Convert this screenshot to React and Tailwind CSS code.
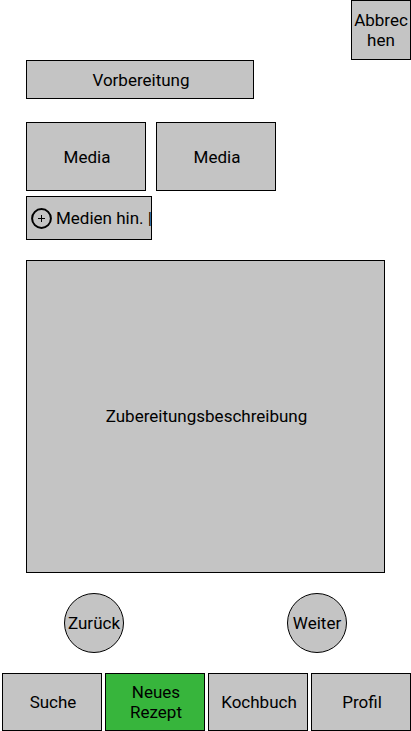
const box = 'border border-black bg-[#c4c4c4]';

const tabs = [
  { label: 'Suche', active: false },
  { label: 'Neues Rezept', active: true },
  { label: 'Kochbuch', active: false },
  { label: 'Profil', active: false },
];

function AddIcon() {
  return (
    <svg className="size-[21px] shrink-0" viewBox="0 0 21 21" fill="none" stroke="black" aria-hidden="true">
      <circle cx="10.5" cy="10.5" r="9.4" strokeWidth="2" />
      <path d="M10.5 7v7M7 10.5h7" strokeWidth="1" />
    </svg>
  );
}

function RoundButton({ children }) {
  return (
    <button type="button" className={`${box} flex size-[60px] items-center justify-center rounded-full`}>
      {children}
    </button>
  );
}

export default function App() {
  return (
    <div className="flex min-h-screen flex-col bg-white font-['Roboto',sans-serif] text-[17px] leading-5 text-black">
      <header className="flex justify-end">
        <button type="button" className={`${box} size-[60px] text-center break-all`}>
          Abbrechen
        </button>
      </header>

      <main className="flex flex-col px-[26px]">
        <h1 className={`${box} flex h-[39px] w-[228px] items-center justify-center pl-[2px]`}>Vorbereitung</h1>

        <div className="mt-[23px] flex gap-[10px]">
          <button type="button" className={`${box} h-[69px] w-[120px] pl-[2px]`}>Media</button>
          <button type="button" className={`${box} h-[69px] w-[120px] pl-[2px]`}>Media</button>
        </div>

        <button
          type="button"
          className={`${box} mt-[5px] flex h-[44px] w-[126px] items-center gap-1 overflow-hidden pl-1 whitespace-nowrap`}
        >
          <AddIcon />
          <span>Medien hin. |</span>
        </button>

        <textarea
          aria-label="Zubereitungsbeschreibung"
          placeholder="Zubereitungsbeschreibung"
          className={`${box} mt-5 block h-[313px] w-full resize-none py-[145px] pl-[2px] text-center placeholder:text-black`}
        />

        <div className="mt-5 flex justify-between px-[38px]">
          <RoundButton>Zurück</RoundButton>
          <RoundButton>Weiter</RoundButton>
        </div>
      </main>

      <nav className="mt-5 grid grid-cols-4 gap-[3px] pl-[2px]">
        {tabs.map((tab) => (
          <a
            key={tab.label}
            href="#"
            aria-current={tab.active ? 'page' : undefined}
            className={`flex h-[58px] items-center justify-center border border-black pr-3 pl-[14px] text-center ${
              tab.active ? 'bg-[#37b53c]' : 'bg-[#c4c4c4]'
            }`}
          >
            {tab.label}
          </a>
        ))}
      </nav>
    </div>
  );
}
